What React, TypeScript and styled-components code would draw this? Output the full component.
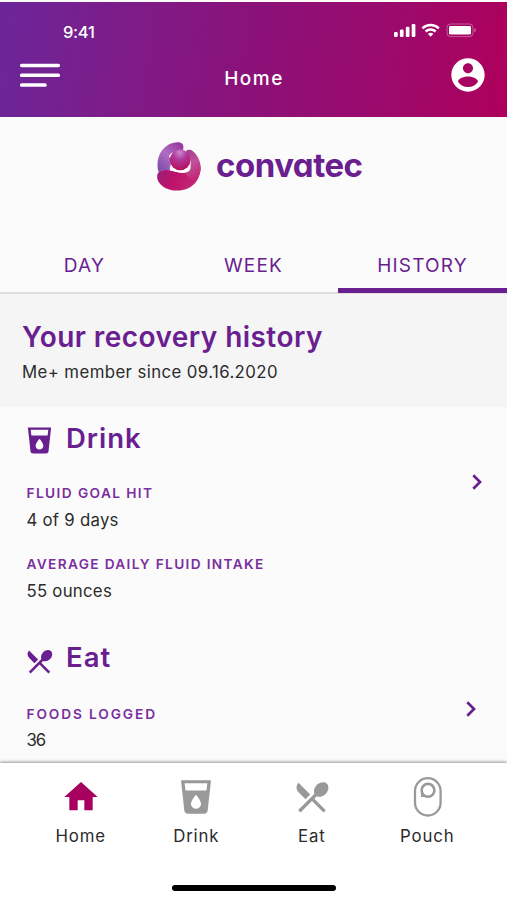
import React from 'react';
import styled, { createGlobalStyle } from 'styled-components';

const purple = '#6a1f91';
const magenta = '#a8005f';
const ink = '#2b2b2b';

const GlobalStyle = createGlobalStyle`
  * { box-sizing: border-box; }
  body { margin: 0; background: #fff; }
  svg { display: block; flex: none; }
`;

const Screen = styled.div`
  width: 507px;
  height: 900px;
  padding-top: 2px;
  display: flex;
  flex-direction: column;
  overflow: hidden;
  background: #fbfbfb;
  color: ${ink};
  font-family: Inter, 'Open Sans', sans-serif;
`;

const Header = styled.header`
  height: 115px;
  flex: none;
  padding-top: 16px;
  color: #fff;
  background: linear-gradient(98deg, #6b2699 0%, #7f1b87 27%, #8b1179 50%, #9b0a6c 75%, #ae005b 100%);
`;

const StatusBar = styled.div`
  height: 28px;
  padding: 0 31px 0 63px;
  display: flex;
  align-items: center;
  justify-content: space-between;
`;

const Clock = styled.span`
  font-size: 16.5px;
  font-weight: 500;
  line-height: 28px;
  letter-spacing: -0.3px;
`;

const StatusIcons = styled.div`
  display: flex;
  align-items: center;
  margin-top: -4px;
`;

const TitleBar = styled.div`
  height: 58px;
  padding: 0 19px 0 20px;
  display: grid;
  grid-template-columns: 40px 1fr 40px;
  align-items: center;
`;

const ScreenTitle = styled.h1`
  margin: 7px 0 0;
  font-size: 19px;
  font-weight: 500;
  line-height: 24px;
  letter-spacing: 1.5px;
  text-align: center;
`;

const Brand = styled.div`
  height: 97px;
  flex: none;
  padding-left: 156px;
  display: flex;
  align-items: center;
  gap: 14px;
`;

const BrandName = styled.span`
  margin-top: -2px;
  font-size: 33px;
  font-weight: 700;
  line-height: 40px;
  letter-spacing: -0.5px;
  font-feature-settings: 'cv11';
  color: ${purple};
`;

const Tabs = styled.nav`
  height: 56px;
  flex: none;
  margin-top: 24px;
  display: grid;
  grid-template-columns: repeat(3, 1fr);
  box-shadow: inset 0 -2px #dedede;
`;

const Tab = styled.a<{ $active?: boolean }>`
  height: 55px;
  font-size: 19px;
  font-weight: 400;
  line-height: 56px;
  letter-spacing: 1.2px;
  text-align: center;
  color: ${purple};
  box-shadow: ${(p) => (p.$active ? `inset 0 -5px ${purple}` : 'none')};
`;

const Intro = styled.section`
  height: 113px;
  flex: none;
  padding: 27px 22px 0;
  background: #f5f5f5;
`;

const IntroTitle = styled.h2`
  margin: 0;
  font-size: 28px;
  font-weight: 600;
  line-height: 32px;
  letter-spacing: 0.44px;
  color: ${purple};
`;

const IntroText = styled.p`
  margin: 7px 0 0;
  font-size: 16.8px;
  line-height: 24px;
  letter-spacing: 0.4px;
`;

const Content = styled.main`
  flex: 1;
  min-height: 0;
  overflow: hidden;
  padding-top: 15px;
`;

const Category = styled.section<{ $inset: number }>`
  padding: 0 ${(p) => p.$inset}px 0 24px;
  display: flex;
  justify-content: space-between;
  & + & { margin-top: 39px; }
`;

const CategoryHead = styled.div`
  height: 33px;
  display: flex;
  align-items: center;
  gap: 11px;
`;

const CategoryIcon = styled.span<{ $drop: number }>`
  padding-top: ${(p) => p.$drop}px;
  color: ${purple};
`;

const CategoryTitle = styled.h3`
  margin: 0;
  font-size: 27.5px;
  font-weight: 600;
  line-height: 33px;
  letter-spacing: 1px;
  color: ${purple};
`;

const Stats = styled.dl<{ $top: number; $gap: number }>`
  margin: ${(p) => p.$top}px 0 0 2.5px;
  dd { margin-top: ${(p) => p.$gap}px; }
`;

const StatLabel = styled.dt<{ $spacing: number }>`
  font-size: 13.7px;
  font-weight: 600;
  line-height: 18px;
  letter-spacing: ${(p) => p.$spacing}px;
  color: #7a2f9e;
  dd + & { margin-top: 24px; }
`;

const StatValue = styled.dd<{ $spacing?: number }>`
  margin: 0;
  font-size: 16.8px;
  line-height: 22px;
  letter-spacing: ${(p) => p.$spacing ?? 0.25}px;
`;

const Chevron = styled.svg<{ $top: number }>`
  width: 10px;
  height: 16px;
  margin-top: ${(p) => p.$top}px;
  fill: none;
  stroke: ${purple};
  stroke-width: 2.7;
`;

const BottomNav = styled.nav`
  height: 137px;
  flex: none;
  display: flex;
  flex-direction: column;
  align-items: center;
  background: #fff;
  box-shadow: 0 -1px 3px rgba(0, 0, 0, 0.42);
  z-index: 1;
`;

const NavItems = styled.div`
  width: 462px;
  margin: 14px 0 0 1px;
  display: grid;
  grid-template-columns: repeat(4, 1fr);
`;

const NavItem = styled.a<{ $active?: boolean }>`
  display: flex;
  flex-direction: column;
  align-items: center;
  gap: 8px;
  color: ${(p) => (p.$active ? magenta : '#999')};
`;

const NavLabel = styled.span`
  font-size: 16.8px;
  line-height: 22px;
  letter-spacing: 0.85px;
  color: ${ink};
`;

const HomeIndicator = styled.div`
  width: 164px;
  height: 6px;
  margin: 38px 0 0 1px;
  border-radius: 3px;
  background: #000;
`;

const SignalIcon = () => (
  <svg width="82" height="16" viewBox="0 0 82 16" fill="#fff">
    <rect x="0" y="10" width="3.7" height="5" rx="1.2" />
    <rect x="5.9" y="7.6" width="3.7" height="7.4" rx="1.2" />
    <rect x="11.8" y="4.8" width="3.7" height="10.2" rx="1.2" />
    <rect x="17.7" y="2" width="3.7" height="13" rx="1.2" />
    <g fill="none" stroke="#fff" strokeWidth="2.5">
      <path d="M28.4 6.3a12 12 0 0 1 16.4 0" />
      <path d="M31.6 9.5a7.4 7.4 0 0 1 10 0" />
    </g>
    <path d="M33.9 11.9a4 4 0 0 1 5.4 0L36.6 14.8z" />
    <rect x="53" y="2" width="26" height="12.6" rx="3.6" fill="none" stroke="#fff" strokeOpacity=".35" />
    <rect x="55" y="4" width="22" height="8.6" rx="1.4" />
    <path d="M80.3 6.2c1 .3 1.6 1.1 1.6 2.1s-.6 1.8-1.6 2.1z" fillOpacity=".4" />
  </svg>
);

const MenuIcon = () => (
  <svg width="40" height="26" viewBox="0 0 40 26" fill="#fff">
    <rect y="1.7" width="40" height="3.5" rx="1.6" />
    <rect y="11.5" width="40" height="3.5" rx="1.6" />
    <rect y="21.3" width="26.7" height="3.5" rx="1.6" />
  </svg>
);

const AccountIcon = () => (
  <svg width="40" height="40" viewBox="0 0 24 24" fill="#fff">
    <path d="M12 2C6.48 2 2 6.48 2 12s4.48 10 10 10 10-4.48 10-10S17.52 2 12 2zm0 3c1.66 0 3 1.34 3 3s-1.34 3-3 3-3-1.34-3-3 1.34-3 3-3zm0 14.2c-2.5 0-4.71-1.28-6-3.22.03-1.99 4-3.08 6-3.08 1.99 0 5.97 1.09 6 3.08-1.29 1.94-3.5 3.22-6 3.22z" />
  </svg>
);

const BrandMark = () => (
  <svg width="46" height="50" viewBox="0 0 46 50">
    <defs>
      <linearGradient id="arm" x1="0.9" y1="0" x2="0.1" y2="1">
        <stop offset="0" stopColor="#93349c" />
        <stop offset="0.5" stopColor="#b06cc2" />
        <stop offset="1" stopColor="#7a4bab" />
      </linearGradient>
      <linearGradient id="side" x1="0" y1="0" x2="0.3" y2="1">
        <stop offset="0" stopColor="#a03a92" />
        <stop offset="0.5" stopColor="#c0529a" />
        <stop offset="1" stopColor="#c22a78" />
      </linearGradient>
      <linearGradient id="base" x1="0" y1="0.2" x2="1" y2="0.5">
        <stop offset="0" stopColor="#9c1f7d" />
        <stop offset="0.45" stopColor="#bd1268" />
        <stop offset="1" stopColor="#c42a78" />
      </linearGradient>
      <radialGradient id="ball" cx="0.48" cy="0.15" r="0.85">
        <stop offset="0" stopColor="#cf86cf" />
        <stop offset="0.4" stopColor="#ae3a98" />
        <stop offset="1" stopColor="#b90b5c" />
      </radialGradient>
    </defs>
    <path d="M2.500 31C0 22 2 10 12 4c5-2.800 11-3.500 14-1.500 2 1.500 1.500 4.500 1 7L15 22c-.8 2.500-.8 5-.5 7.500C10 28.500 6 28.500 2.500 31z" fill="url(#arm)" />
    <path d="M12.800 15.500c1.200-2.200 2.600-3.500 4-4.200l-1.500 6.200z" fill="#fff" />
    <path d="M1.200 34.500C1.800 30.200 6 28.700 11 29c7 .6 11 3.400 17 2.800 6.500-.6 11-4 15.500-8.800C47 35 38.500 49.400 21.500 49.600 9 49.600.2 42 1.200 34.500z" fill="url(#base)" />
    <path d="M30 10c1.500-1.500 4-1.800 6-.5 5 3.300 8.900 10.500 8.900 18.500-.5 5-3 9-6.400 11.500C34 38 31 35 29 31.500c5-2.500 7-8 5-14z" fill="url(#side)" />
    <path d="M13.800 26.500l4-1 6 3.300c3-.3 5.500-1.300 7.500-3.300l3.200-.8c.5 2.600-.3 4.800-2.500 6.100-3 1.300-6.500 1.300-10.500.2-2.500-.7-5-1.400-7.600-1.700z" fill="#fff" />
    <circle cx="24.200" cy="18.900" r="10.300" fill="url(#ball)" />
  </svg>
);

const CupIcon = ({ size }: { size: number }) => (
  <svg width={size} height={size} viewBox="0 0 24 24" fill="currentColor" fillRule="evenodd">
    <path d="M3 2l2.010 18.230C5.130 21.230 5.970 22 7 22h10c1.030 0 1.870-.77 1.990-1.770L21 2H3zm9 17c-1.660 0-3-1.340-3-3 0-2 3-5.400 3-5.400s3 3.400 3 5.400c0 1.660-1.340 3-3 3zM5.200 3.700h13.600l-.5 4.400H5.700z" />
  </svg>
);

const UtensilsIcon = ({ size }: { size: number }) => (
  <svg width={size} height={size} viewBox="0 0 24 24" fill="currentColor">
    <path d="M8.100 13.340l2.830-2.830L3.910 3.500c-1.560 1.560-1.560 4.090 0 5.660l4.190 4.180zm6.780-1.810c1.530.71 3.680.21 5.270-1.380 1.910-1.910 2.280-4.650.81-6.120-1.460-1.460-4.200-1.100-6.120.81-1.590 1.590-2.090 3.740-1.380 5.270L3.700 19.870l1.410 1.410L12 14.410l6.880 6.880 1.410-1.410L13.410 13l1.470-1.470z" />
  </svg>
);

const HouseIcon = () => (
  <svg width="40" height="40" viewBox="0 0 24 24" fill="currentColor">
    <path d="M10 20v-6h4v6h5v-8h3L12 3 2 12h3v8z" />
  </svg>
);

const PouchIcon = () => (
  <svg width="40" height="40" viewBox="0 0 40 40" fill="none" stroke="currentColor">
    <rect x="8" y="1.200" width="25.600" height="37.300" rx="12.800" strokeWidth="2.300" />
    <circle cx="21" cy="13.300" r="6.400" strokeWidth="2.600" />
    <path d="M14.700 14.500v4.700h3.500" strokeWidth="1.500" />
  </svg>
);

const ChevronRight = ({ top }: { top: number }) => (
  <Chevron $top={top} viewBox="0 0 10 16">
    <path d="M1.300 1.300L8 8l-6.700 6.700" />
  </Chevron>
);

export default function App() {
  return (
    <>
      <GlobalStyle />
      <Screen>
        <Header>
          <StatusBar>
            <Clock>9:41</Clock>
            <StatusIcons>
              <SignalIcon />
            </StatusIcons>
          </StatusBar>
          <TitleBar>
            <MenuIcon />
            <ScreenTitle>Home</ScreenTitle>
            <AccountIcon />
          </TitleBar>
        </Header>

        <Brand>
          <BrandMark />
          <BrandName>convatec</BrandName>
        </Brand>

        <Tabs>
          <Tab>DAY</Tab>
          <Tab>WEEK</Tab>
          <Tab $active>HISTORY</Tab>
        </Tabs>

        <Intro>
          <IntroTitle>Your recovery history</IntroTitle>
          <IntroText>Me+ member since 09.16.2020</IntroText>
        </Intro>

        <Content>
          <Category $inset={25}>
            <div>
              <CategoryHead>
                <CategoryIcon $drop={3}>
                  <CupIcon size={31} />
                </CategoryIcon>
                <CategoryTitle>Drink</CategoryTitle>
              </CategoryHead>
              <Stats $top={29} $gap={7}>
                <StatLabel $spacing={1.4}>FLUID GOAL HIT</StatLabel>
                <StatValue>4 of 9 days</StatValue>
                <StatLabel $spacing={1.33}>AVERAGE DAILY FLUID INTAKE</StatLabel>
                <StatValue>55 ounces</StatValue>
              </Stats>
            </div>
            <ChevronRight top={52} />
          </Category>

          <Category $inset={31}>
            <div>
              <CategoryHead>
                <CategoryIcon $drop={7}>
                  <UtensilsIcon size={31} />
                </CategoryIcon>
                <CategoryTitle>Eat</CategoryTitle>
              </CategoryHead>
              <Stats $top={31} $gap={6}>
                <StatLabel $spacing={1.88}>FOODS LOGGED</StatLabel>
                <StatValue $spacing={-1}>36</StatValue>
              </Stats>
            </div>
            <ChevronRight top={60} />
          </Category>
        </Content>

        <BottomNav>
          <NavItems>
            <NavItem $active>
              <HouseIcon />
              <NavLabel>Home</NavLabel>
            </NavItem>
            <NavItem>
              <CupIcon size={40} />
              <NavLabel>Drink</NavLabel>
            </NavItem>
            <NavItem>
              <UtensilsIcon size={40} />
              <NavLabel>Eat</NavLabel>
            </NavItem>
            <NavItem>
              <PouchIcon />
              <NavLabel>Pouch</NavLabel>
            </NavItem>
          </NavItems>
          <HomeIndicator />
        </BottomNav>
      </Screen>
    </>
  );
}
